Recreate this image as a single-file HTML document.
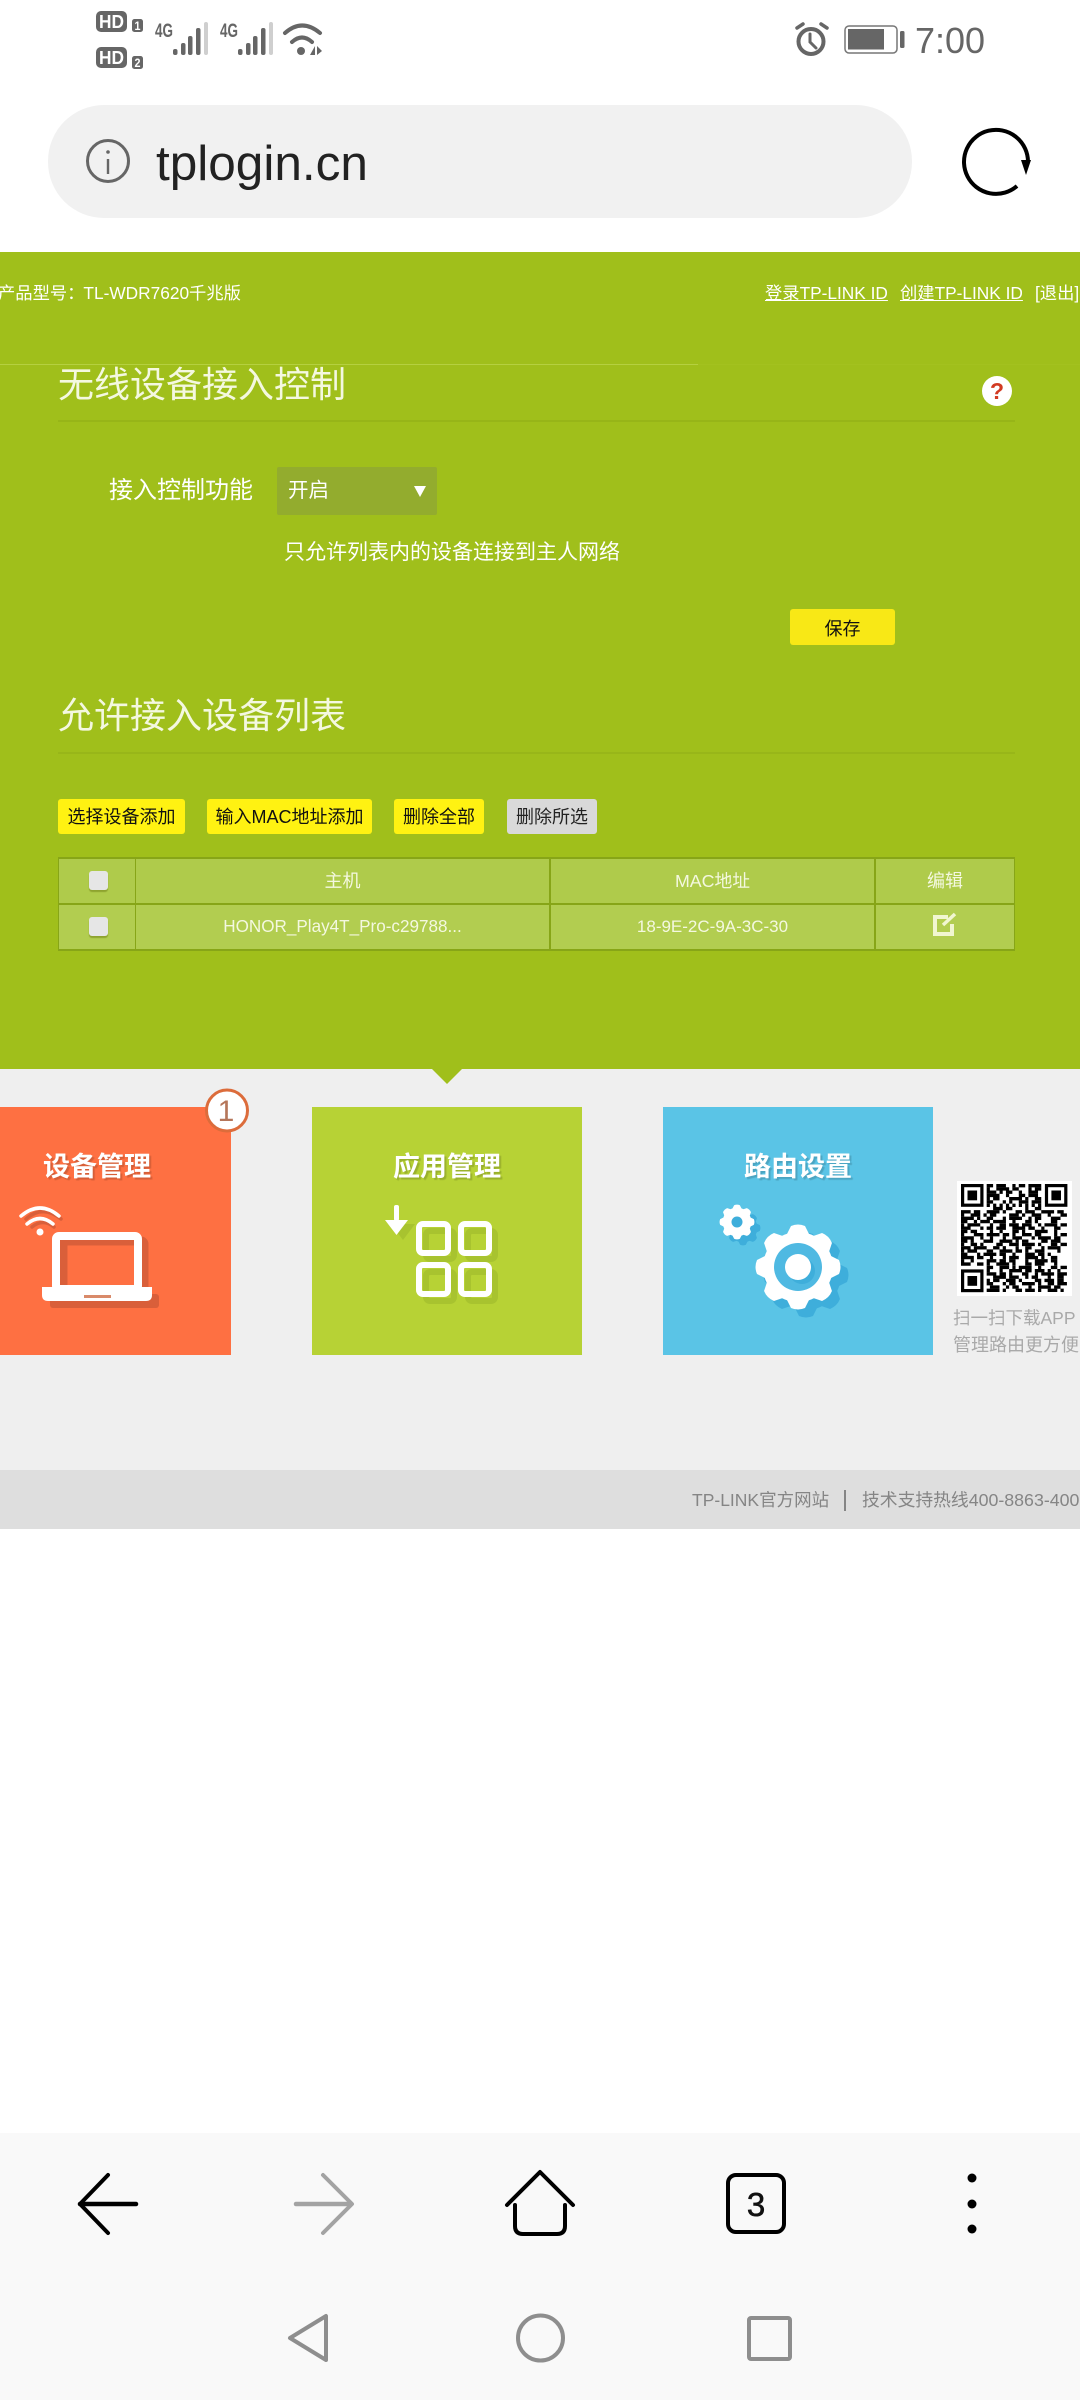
<!DOCTYPE html>
<html lang="zh-CN">
<head>
<meta charset="utf-8">
<title>无线设备接入控制</title>
<style>
html,body{margin:0;padding:0;background:#fff;}
#p{position:relative;width:1080px;height:2400px;overflow:hidden;background:#fff;font-family:"Liberation Sans","Noto Sans CJK SC",sans-serif;}
#p div{position:absolute;}
.t{white-space:nowrap;line-height:30px;height:30px;}
.w{color:#fff;}
.c{text-align:center;}
.bk{color:#111;}
.btn{border-radius:3px;background:#fff212;}
.ct{color:#fff;font-size:27px;font-weight:700;text-align:center;line-height:34px;height:34px;top:1150px;text-shadow:2px 2px 1px rgba(0,0,0,.16);white-space:nowrap;}
svg{position:absolute;left:0;top:0;}
svg text{font-family:"Liberation Sans","Noto Sans CJK SC",sans-serif;}
</style>
</head>
<body>
<div id="p">
  <!-- URL bar -->
  <div style="left:48px;top:105px;width:864px;height:113px;border-radius:56px;background:#f1f1f1;"></div>
  <div class="t" style="left:156px;top:134px;height:60px;line-height:60px;font-size:49.500px;color:#222;">tplogin.cn</div>

  <!-- green panel -->
  <div style="left:0;top:252px;width:1080px;height:817px;background:#a0bf1b;"></div>
  <div class="t w" style="left:-2px;top:278px;font-size:17.300px;">产品型号：<span style="margin-left:-1px;">TL-WDR7620千兆版</span></div>
  <div class="t w" style="left:765px;top:278px;font-size:17.300px;text-decoration:underline;">登录TP-LINK ID</div>
  <div class="t w" style="left:900px;top:278px;font-size:17.300px;text-decoration:underline;">创建TP-LINK ID</div>
  <div class="t w" style="left:1035px;top:278px;font-size:17.300px;">[退出]</div>
  <div style="left:0;top:364px;width:698px;height:1px;background:#b5d040;"></div>
  <div style="left:698px;top:364px;width:382px;height:1px;background:#a3c11f;"></div>

  <div class="t" style="left:58px;top:363px;height:44px;line-height:44px;font-size:36px;color:#f4f8e0;">无线设备接入控制</div>
  <div style="left:58px;top:420px;width:957px;height:2px;background:#97b518;"></div>

  <div class="t w" style="left:109px;top:476px;font-size:24px;">接入控制功能</div>
  <div style="left:277px;top:467px;width:160px;height:48px;background:#93ac2e;border-radius:2px;"></div>
  <div class="t w" style="left:288px;top:476px;font-size:20.500px;">开启</div>
  <div class="t w" style="left:284px;top:538px;font-size:21px;">只允许列表内的设备连接到主人网络</div>

  <div style="left:790px;top:609px;width:105px;height:36px;background:#f8e816;border-radius:3px;"></div>
  <div class="t c bk" style="left:790px;top:614px;width:105px;font-size:18px;">保存</div>

  <div class="t" style="left:58px;top:694px;height:44px;line-height:44px;font-size:36px;color:#f4f8e0;">允许接入设备列表</div>
  <div style="left:58px;top:752px;width:957px;height:2px;background:#98b619;"></div>

  <div class="btn" style="left:58px;top:799px;width:127px;height:35px;"></div>
  <div class="btn" style="left:207px;top:799px;width:165px;height:35px;"></div>
  <div class="btn" style="left:394px;top:799px;width:90px;height:35px;"></div>
  <div class="btn" style="left:507px;top:799px;width:90px;height:35px;background:#d9d9d9;"></div>
  <div class="t c bk" style="left:58px;top:802px;width:127px;font-size:18px;">选择设备添加</div>
  <div class="t c bk" style="left:207px;top:802px;width:165px;font-size:18px;">输入MAC地址添加</div>
  <div class="t c bk" style="left:394px;top:802px;width:90px;font-size:18px;">删除全部</div>
  <div class="t c bk" style="left:507px;top:802px;width:90px;font-size:18px;color:#222;">删除所选</div>

  <!-- table -->
  <div style="left:58px;top:857px;width:957px;height:94px;background:#afcb4b;"></div>
  <div style="left:58px;top:905px;width:957px;height:45px;background:#b2cd50;"></div>
  <div style="left:58px;top:857px;width:957px;height:2px;background:#87a517;"></div>
  <div style="left:58px;top:903px;width:957px;height:2px;background:#87a517;"></div>
  <div style="left:58px;top:949px;width:957px;height:2px;background:#87a517;"></div>
  <div style="left:58px;top:857px;width:1px;height:94px;background:#87a517;"></div>
  <div style="left:1014px;top:857px;width:1px;height:94px;background:#87a517;"></div>
  <div style="left:135px;top:857px;width:1px;height:94px;background:#87a517;"></div>
  <div style="left:549px;top:857px;width:2px;height:94px;background:#87a517;"></div>
  <div style="left:874px;top:857px;width:2px;height:94px;background:#87a517;"></div>
  <div style="left:89px;top:871px;width:19px;height:19px;background:#e6e6e6;border-radius:3px;box-shadow:0 2px 1px #8ea32f;"></div>
  <div style="left:89px;top:917px;width:19px;height:19px;background:#e6e6e6;border-radius:3px;box-shadow:0 2px 1px #8ea32f;"></div>
  <div class="t c" style="left:136px;top:866px;width:413px;font-size:18px;color:#f4f8e0;">主机</div>
  <div class="t c" style="left:551px;top:866px;width:323px;font-size:17.800px;color:#f4f8e0;">MAC地址</div>
  <div class="t c" style="left:876px;top:866px;width:138px;font-size:18px;color:#f4f8e0;">编辑</div>
  <div class="t c" style="left:136px;top:912px;width:413px;font-size:17.100px;color:#f4f8e0;">HONOR_Play4T_Pro-c29788...</div>
  <div class="t c" style="left:551px;top:912px;width:323px;font-size:17px;color:#f4f8e0;">18-9E-2C-9A-3C-30</div>

  <!-- bottom grey -->
  <div style="left:0;top:1069px;width:1080px;height:401px;background:#efefef;"></div>
  <div style="left:0;top:1470px;width:1080px;height:59px;background:#dedede;"></div>
  <div style="left:0;top:1107px;width:231px;height:248px;background:#fe7042;"></div>
  <div style="left:312px;top:1107px;width:270px;height:248px;background:#b7d235;"></div>
  <div style="left:663px;top:1107px;width:270px;height:248px;background:#5ac4e6;"></div>
  <div class="ct" style="left:0;width:194px;">设备管理</div>
  <div class="ct" style="left:312px;width:270px;">应用管理</div>
  <div class="ct" style="left:663px;width:270px;">路由设置</div>

  <div class="t" style="left:953px;top:1303px;font-size:17.500px;color:#a9a9a9;">扫一扫下载APP</div>
  <div class="t" style="left:953px;top:1330px;font-size:18px;color:#a9a9a9;">管理路由更方便</div>
  <div class="t" style="left:692px;top:1485px;font-size:17.500px;color:#858585;">TP-LINK官方网站</div>
  <div style="left:844px;top:1490px;width:2px;height:21px;background:#858585;"></div>
  <div class="t" style="left:862px;top:1485px;font-size:17.800px;color:#858585;">技术支持热线400-8863-400</div>

  <!-- bottom nav bg -->
  <div style="left:0;top:2133px;width:1080px;height:267px;background:#f9f9f9;"></div>

  <svg width="1080" height="2400" viewBox="0 0 1080 2400" xmlns="http://www.w3.org/2000/svg">
    <!-- status left -->
    <g fill="#666">
      <rect x="96" y="11" width="31" height="21" rx="5"/>
      <rect x="96" y="47" width="31" height="21" rx="5"/>
      <rect x="132" y="19" width="11" height="13" rx="2.500"/>
      <rect x="132" y="56" width="11" height="13" rx="2.500"/>
    </g>
    <g fill="#fff" font-weight="700">
      <text x="99" y="28" font-size="18" textLength="25" lengthAdjust="spacingAndGlyphs">HD</text>
      <text x="99" y="64" font-size="18" textLength="25" lengthAdjust="spacingAndGlyphs">HD</text>
      <text x="134.500" y="30" font-size="12" textLength="6" lengthAdjust="spacingAndGlyphs">1</text>
      <text x="134.500" y="67" font-size="12" textLength="6" lengthAdjust="spacingAndGlyphs">2</text>
    </g>
    <g fill="#666" font-weight="700">
      <text x="155" y="37" font-size="19" textLength="18" lengthAdjust="spacingAndGlyphs">4G</text>
      <text x="220" y="37" font-size="19" textLength="18" lengthAdjust="spacingAndGlyphs">4G</text>
      <rect x="173" y="49" width="4.500" height="6" rx="2"/><rect x="181" y="43" width="4.500" height="12" rx="2"/><rect x="188" y="36" width="4.500" height="19" rx="2"/><rect x="196" y="28" width="4.500" height="27" rx="2"/>
      <rect x="238" y="49" width="4.500" height="6" rx="2"/><rect x="246" y="43" width="4.500" height="12" rx="2"/><rect x="253" y="36" width="4.500" height="19" rx="2"/><rect x="261" y="28" width="4.500" height="27" rx="2"/>
    </g>
    <rect x="204" y="22" width="4" height="33" rx="2" fill="#cfcfcf"/>
    <rect x="269" y="22" width="4" height="33" rx="2" fill="#cfcfcf"/>
    <g fill="none" stroke="#666" stroke-width="4" stroke-linecap="round">
      <path d="M285 33Q302 18 320 33"/>
      <path d="M292 42Q302 33 312 42"/>
    </g>
    <circle cx="301" cy="51" r="4" fill="#666"/>
    <polygon points="310,55 315,46 315,55" fill="#666"/>
    <polygon points="317,46 317,55 322,51" fill="#666"/>

    <!-- status right -->
    <g fill="none" stroke="#666" stroke-linecap="round">
      <circle cx="811" cy="41.500" r="12.500" stroke-width="4"/>
      <path d="M797 28L803 24M821 24L827 28" stroke-width="3.500"/>
      <path d="M810 34V42L816 48" stroke-width="3"/>
      <rect x="845" y="26" width="52" height="27" rx="4" stroke="#777" stroke-width="1.500"/>
    </g>
    <rect x="848" y="29" width="36" height="20.500" fill="#666"/>
    <rect x="900" y="31" width="4.500" height="17" rx="1.500" fill="#666"/>
    <text x="915" y="53" font-size="36" fill="#666">7:00</text>

    <!-- info icon -->
    <circle cx="108" cy="161" r="20.500" fill="none" stroke="#666" stroke-width="3"/>
    <rect x="106.800" y="159" width="2.400" height="15" fill="#666"/>
    <circle cx="108" cy="152" r="1.800" fill="#666"/>

    <!-- reload -->
    <path d="M1017 186A32 32 0 1 1 1028 162" fill="none" stroke="#000" stroke-width="4"/>
    <polygon points="1021,160 1031,160 1026,175" fill="#000"/>

    <!-- help -->
    <circle cx="997" cy="391" r="15" fill="#fff"/>
    <text x="997" y="399" font-size="23" font-weight="700" fill="#d23a22" text-anchor="middle">?</text>

    <!-- select arrow -->
    <polygon points="414,486 426,486 420,497" fill="#fff"/>

    <!-- edit icon -->
    <path d="M948 917H935V934H952V924" fill="none" stroke="#f1f6d0" stroke-width="4"/>
    <path d="M943 925L955 914" fill="none" stroke="#f1f6d0" stroke-width="3.500"/>

    <!-- triangle -->
    <polygon points="432,1069 462,1069 447,1084" fill="#a0bf1b"/>

    <!-- badge -->
    <circle cx="227" cy="1110.500" r="20.500" fill="#fff" stroke="#dc6c3b" stroke-width="3"/>
    <text x="226" y="1121" font-size="30" fill="#b5765a" text-anchor="middle">1</text>

    <!-- laptop -->
    <rect x="63" y="1241" width="81" height="52" rx="3" fill="none" stroke="#d95f3a" stroke-width="9"/>
    <rect x="50" y="1294" width="109" height="14" rx="3" fill="#d95f3a"/>
    <g fill="none" stroke="#d95f3a" stroke-width="3.500" stroke-linecap="round">
      <path d="M26 1219Q43 1204 61 1219"/>
      <path d="M32 1227Q43 1218 54 1227"/>
    </g>
    <rect x="56" y="1236" width="82" height="53" rx="3" fill="none" stroke="#fff" stroke-width="8"/>
    <path d="M42 1287H152V1295Q152 1301 146 1301H48Q42 1301 42 1295Z" fill="#fff"/>
    <rect x="84" y="1295" width="27" height="3" fill="#d98a6a"/>
    <g fill="none" stroke="#fff" stroke-width="3.500" stroke-linecap="round">
      <path d="M21 1216Q40 1200 59 1216"/>
      <path d="M27 1224Q40 1213 53 1224"/>
    </g>
    <circle cx="40" cy="1232" r="3.500" fill="#fff"/>

    <!-- app icon -->
    <g fill="none" stroke="#a8c32f" stroke-width="6">
      <rect x="426" y="1231" width="28" height="28" rx="4"/>
      <rect x="468" y="1231" width="27" height="28" rx="4"/>
      <rect x="426" y="1272" width="28" height="29" rx="4"/>
      <rect x="468" y="1272" width="27" height="29" rx="4"/>
    </g>
    <polygon points="391,1224 415,1224 403,1240" fill="#a8c32f"/>
    <g fill="none" stroke="#fff" stroke-width="6">
      <rect x="419" y="1224" width="29" height="29" rx="4"/>
      <rect x="461" y="1224" width="28" height="29" rx="4"/>
      <rect x="419" y="1265" width="29" height="29" rx="4"/>
      <rect x="461" y="1265" width="28" height="29" rx="4"/>
    </g>
    <rect x="394" y="1205" width="5" height="16" rx="2" fill="#fff"/>
    <polygon points="385,1220 408,1220 396.500,1235" fill="#fff"/>

    <!-- gears -->
    <defs>
      <g id="g8">
        <circle r="35"/>
        <g id="tooth"><path d="M-12 -31L-7 -41Q0 -44 7 -41L12 -31Z"/></g>
        <use href="#tooth" transform="rotate(45)"/>
        <use href="#tooth" transform="rotate(90)"/>
        <use href="#tooth" transform="rotate(135)"/>
        <use href="#tooth" transform="rotate(180)"/>
        <use href="#tooth" transform="rotate(225)"/>
        <use href="#tooth" transform="rotate(270)"/>
        <use href="#tooth" transform="rotate(315)"/>
      </g>
    </defs>
    <use href="#g8" transform="translate(806,1275)" fill="#3eaedb"/>
    <use href="#g8" transform="translate(743,1228) scale(.41)" fill="#3eaedb"/>
    <use href="#g8" transform="translate(798,1267)" fill="#fff"/>
    <circle cx="798" cy="1267" r="24" fill="#4fb9e2"/>
    <circle cx="802" cy="1271" r="13" fill="#3eaedb"/>
    <circle cx="798" cy="1267" r="13" fill="#fff"/>
    <use href="#g8" transform="translate(737,1222) scale(.41)" fill="#fff"/>
    <circle cx="737" cy="1222" r="5.500" fill="#3eaedb"/>

    <!-- QR -->
    <rect x="957" y="1181" width="115" height="115" fill="#fff"/>
    <g transform="translate(961,1184) scale(3.210,3.270)" fill="none" stroke="#000" stroke-width="1.030">
      <path d="M8 .5H25" stroke-dasharray="2 1 3 2 1 1 2 1 4"/>
      <path d="M8 1.500H25" stroke-dasharray="1 2 4 1 2 3 1 1 2"/>
      <path d="M8 2.500H25" stroke-dasharray="3 1 1 1 2 2 1 2 3 1"/>
      <path d="M8 3.500H25" stroke-dasharray="4 2 1 3 2 1 3 1"/>
      <path d="M8 4.500H25" stroke-dasharray="1 1 2 3 4 1 1 2 2"/>
      <path d="M8 5.500H25" stroke-dasharray="2 3 1 1 1 2 3 1 3"/>
      <path d="M8 6.500H25" stroke-dasharray="1 1 1 1 1 1 1 1 1 1 1 1 1 1 1 1 1"/>
      <path d="M8 7.500H25" stroke-dasharray="0 2 3 1 2 4 1 2 2"/>
      <path d="M0 8.500H33" stroke-dasharray="3 1 2 2 4 1 1 3 2 1 3 2 4 1 2 1"/>
      <path d="M0 9.500H33" stroke-dasharray="1 2 3 1 1 1 2 4 3 1 1 2 3 2 1 3 2"/>
      <path d="M0 10.500H33" stroke-dasharray="4 1 1 2 2 3 1 1 4 2 1 1 2 3 3 2"/>
      <path d="M0 11.500H33" stroke-dasharray="2 2 1 1 3 1 4 2 1 3 2 1 1 4 2 3"/>
      <path d="M0 12.500H33" stroke-dasharray="1 1 4 3 1 2 2 1 3 1 3 2 1 1 4 1 2"/>
      <path d="M0 13.500H33" stroke-dasharray="3 3 1 1 2 1 3 2 4 1 2 2 1 3 2 2"/>
      <path d="M0 14.500H33" stroke-dasharray="2 1 2 4 1 2 1 3 2 1 1 3 4 2 1 3"/>
      <path d="M0 15.500H33" stroke-dasharray="1 3 3 1 4 1 2 1 1 2 3 1 2 4 1 1 2"/>
      <path d="M0 16.500H33" stroke-dasharray="4 2 1 2 1 3 1 2 3 3 1 1 4 1 2 2"/>
      <path d="M0 17.500H33" stroke-dasharray="2 1 1 3 3 2 4 1 1 1 2 4 2 1 3 2"/>
      <path d="M0 18.500H33" stroke-dasharray="1 2 2 1 1 4 2 2 3 1 4 1 1 3 2 1 2"/>
      <path d="M0 19.500H33" stroke-dasharray="3 1 4 2 2 1 1 3 1 2 2 3 1 1 4 2"/>
      <path d="M0 20.500H33" stroke-dasharray="1 1 3 3 2 2 4 1 2 1 1 2 3 4 1 2"/>
      <path d="M0 21.500H33" stroke-dasharray="2 3 1 1 4 1 2 2 1 3 3 1 2 1 1 5"/>
      <path d="M0 22.500H33" stroke-dasharray="4 1 2 2 1 3 1 1 3 2 4 1 1 2 2 3"/>
      <path d="M0 23.500H33" stroke-dasharray="1 2 1 4 3 1 2 1 2 3 1 2 4 1 2 3"/>
      <path d="M0 24.500H33" stroke-dasharray="3 2 2 1 1 2 4 1 1 3 2 1 3 3 1 3"/>
      <path d="M8 25.500H33" stroke-dasharray="2 2 3 1 1 1 4 2 1 3 2 1 3"/>
      <path d="M8 26.500H33" stroke-dasharray="1 3 1 2 4 1 2 1 3 1 1 2 1 2"/>
      <path d="M8 27.500H33" stroke-dasharray="3 1 2 1 1 3 2 2 1 1 4 1 3"/>
      <path d="M8 28.500H33" stroke-dasharray="0 2 4 1 3 2 1 1 2 3 1 2 2 1"/>
      <path d="M8 29.500H33" stroke-dasharray="1 1 2 2 3 1 1 4 2 1 3 1 2"/>
      <path d="M8 30.500H33" stroke-dasharray="2 3 1 1 2 2 4 1 1 2 2 1 3"/>
      <path d="M8 31.500H33" stroke-dasharray="0 1 3 2 1 1 2 3 1 2 4 1 2 1"/>
      <path d="M8 32.500H33" stroke-dasharray="4 1 1 3 2 1 3 1 1 2 3 1 1"/>
    </g>
    <g fill="none" stroke="#000">
      <rect x="962.600" y="1185.600" width="19.300" height="19.600" stroke-width="3.200"/>
      <rect x="1046.500" y="1185.600" width="19.300" height="19.600" stroke-width="3.200"/>
      <rect x="962.600" y="1271" width="19.300" height="19.600" stroke-width="3.200"/>
    </g>
    <rect x="967.500" y="1190.500" width="9.600" height="9.800" fill="#000"/>
    <rect x="1051.400" y="1190.500" width="9.600" height="9.800" fill="#000"/>
    <rect x="967.500" y="1276" width="9.600" height="9.800" fill="#000"/>

    <!-- browser nav -->
    <g fill="none" stroke="#000" stroke-width="4" stroke-linecap="round" stroke-linejoin="round">
      <path d="M108 2175L80 2204L108 2233"/>
      <path d="M80 2204H136" stroke-width="4.500"/>
      <path d="M507 2205L540 2172L573 2205"/>
      <path d="M515 2205V2226Q515 2234 523 2234H557Q565 2234 565 2226V2205"/>
      <rect x="728" y="2175" width="56" height="57" rx="8"/>
    </g>
    <g fill="none" stroke="#a3a3a3" stroke-width="4" stroke-linecap="round" stroke-linejoin="round">
      <path d="M323 2175L352 2204L323 2233"/>
      <path d="M296 2204H351" stroke-width="4.500"/>
    </g>
    <text x="756" y="2216" font-size="33" fill="#111" stroke="#111" stroke-width=".6" text-anchor="middle">3</text>
    <circle cx="972" cy="2178" r="4.500" fill="#000"/>
    <circle cx="972" cy="2204" r="4.500" fill="#000"/>
    <circle cx="972" cy="2229" r="4.500" fill="#000"/>

    <!-- system nav -->
    <g fill="none" stroke="#8e8e8e" stroke-width="4" stroke-linejoin="round">
      <path d="M326 2316V2360L290 2338Z"/>
      <circle cx="540.500" cy="2338" r="22.500"/>
      <rect x="749" y="2318" width="41" height="41" rx="2"/>
    </g>
  </svg>
</div>
</body>
</html>
